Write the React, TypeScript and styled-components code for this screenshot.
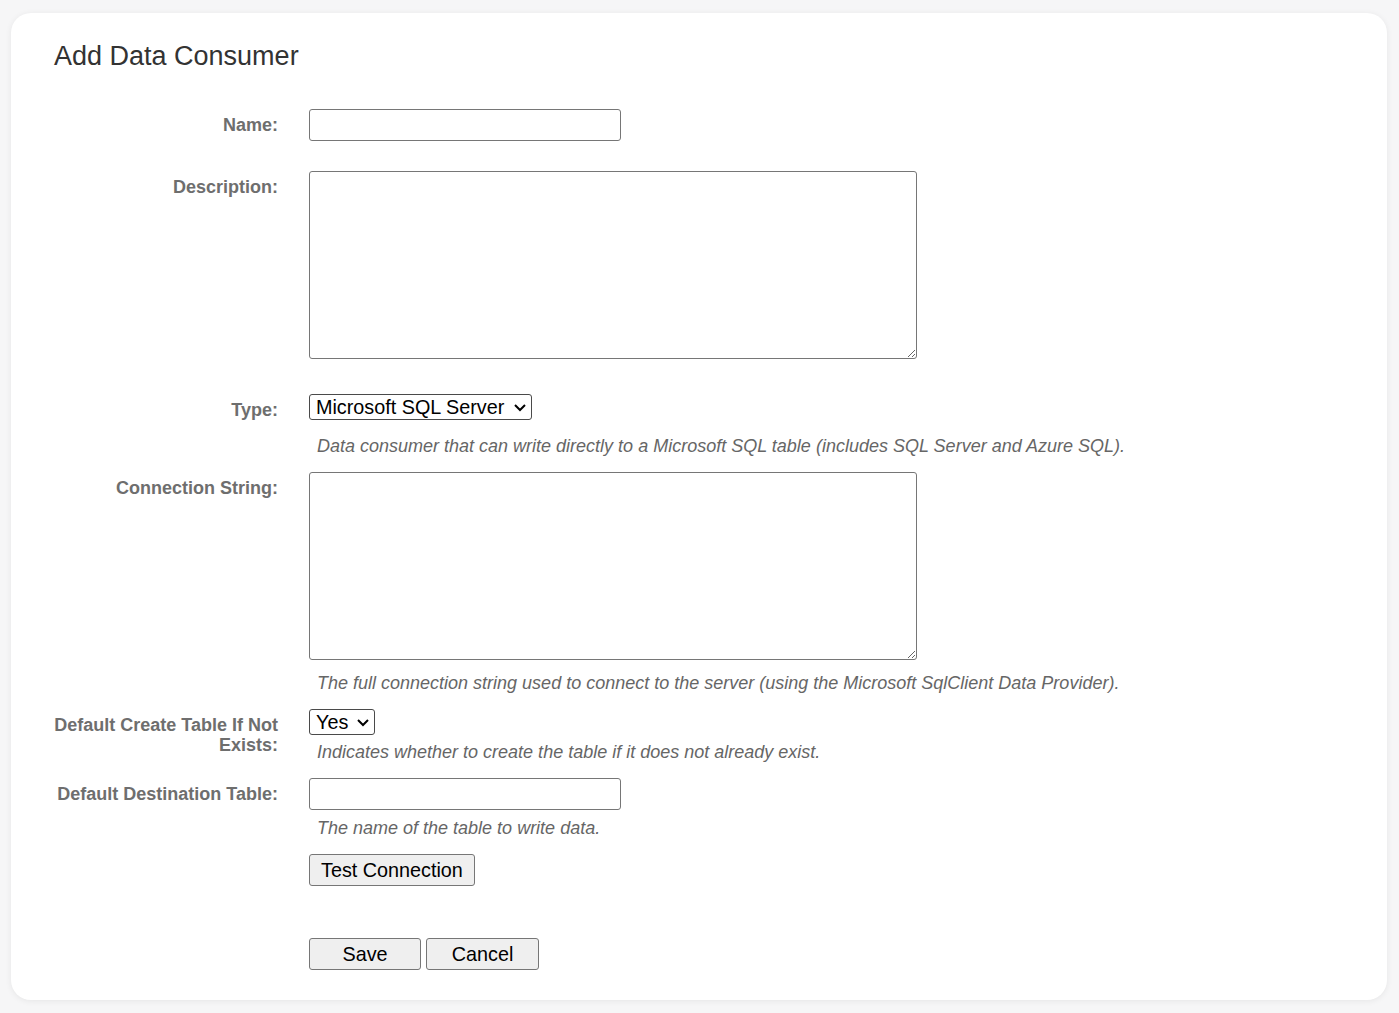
import { ReactNode } from 'react'
import styled, { createGlobalStyle } from 'styled-components'

const GlobalStyle = createGlobalStyle`
  html, body {
    margin: 0;
    padding: 0;
    background: #f6f6f7;
    font-family: 'Liberation Sans', Arial, sans-serif;
    font-size: 18px;
  }
`

const Page = styled.div`
  padding: 13px 12px 14px 11px;
`

const Card = styled.div`
  background: #ffffff;
  border-radius: 20px;
  box-shadow: 0 1px 6px rgba(0, 0, 0, 0.07);
  padding: 28px 43px 30px 43px;
`

const Title = styled.h1`
  margin: 0 0 38px 0;
  font-size: 27px;
  font-weight: normal;
  line-height: 30px;
  color: #333;
`

const Row = styled.div<{ $space: number }>`
  display: grid;
  grid-template-columns: 224px 1fr;
  column-gap: 31px;
  margin-bottom: ${(p) => p.$space}px;
`

const Label = styled.label`
  text-align: right;
  font-weight: bold;
  color: #6e6e6e;
  line-height: 20px;
  padding-top: 6px;
`

const Cell = styled.div`
  display: flex;
  flex-direction: column;
  align-items: flex-start;
`

const TextInput = styled.input`
  box-sizing: border-box;
  width: 312px;
  height: 32px;
  margin: 0;
  border: 1px solid #767676;
  border-radius: 3px;
  font-family: inherit;
  font-size: 18px;
  padding: 2px 6px;
`

const TextArea = styled.textarea`
  display: block;
  box-sizing: border-box;
  width: 608px;
  height: 188px;
  margin: 0;
  border: 1px solid #767676;
  border-radius: 3px;
  font-family: inherit;
  font-size: 18px;
  padding: 2px;
`

const SelectWrap = styled.div`
  position: relative;
  display: inline-block;
`

const Select = styled.select`
  display: block;
  box-sizing: border-box;
  height: 26px;
  margin: 0;
  padding: 0 25px 0 6px;
  appearance: none;
  -webkit-appearance: none;
  background: #fff;
  border: 1px solid #4a4a4a;
  border-radius: 3px;
  font-family: 'Liberation Sans', Arial, sans-serif;
  font-size: 19.8px;
  line-height: 24px;
  color: #000;
`

const Chevron = styled.svg`
  position: absolute;
  right: 5px;
  top: 9px;
  width: 14px;
  height: 9px;
  pointer-events: none;
`

const Help = styled.div<{ $top: number }>`
  margin-top: ${(p) => p.$top}px;
  padding-left: 8px;
  font-style: italic;
  color: #666;
  line-height: 20px;
`

const Button = styled.button<{ $w?: number }>`
  box-sizing: border-box;
  height: 32px;
  ${(p) => (p.$w ? `width: ${p.$w}px;` : '')}
  padding: 0 11px;
  margin: 0;
  background: #efefef;
  border: 1px solid #767676;
  border-radius: 3px;
  font-family: 'Liberation Sans', Arial, sans-serif;
  font-size: 19.8px;
  color: #000;
`

const Buttons = styled.div`
  display: flex;
  gap: 5px;
`

function Field(props: { label: ReactNode; space: number; children: ReactNode }) {
  return (
    <Row $space={props.space}>
      <Label>{props.label}</Label>
      <Cell>{props.children}</Cell>
    </Row>
  )
}

function Dropdown(props: { value: string; options: [string, string][] }) {
  return (
    <SelectWrap>
      <Select defaultValue={props.value}>
        {props.options.map(([v, t]) => (
          <option key={v} value={v}>
            {t}
          </option>
        ))}
      </Select>
      <Chevron viewBox='0 0 14 9'>
        <path d='M2 2 L7 7 L12 2' fill='none' stroke='#000' strokeWidth='2' />
      </Chevron>
    </SelectWrap>
  )
}

export default function App() {
  return (
    <>
      <GlobalStyle />
      <Page>
        <Card>
          <Title>Add Data Consumer</Title>
          <Field label='Name:' space={30}>
            <TextInput type='text' />
          </Field>
          <Field label='Description:' space={35}>
            <TextArea />
          </Field>
          <Field label='Type:' space={16}>
            <Dropdown value='mssql' options={[['mssql', 'Microsoft SQL Server']]} />
            <Help $top={16}>
              Data consumer that can write directly to a Microsoft SQL table (includes SQL Server and Azure SQL).
            </Help>
          </Field>
          <Field label='Connection String:' space={16}>
            <TextArea />
            <Help $top={13}>
              The full connection string used to connect to the server (using the Microsoft SqlClient Data Provider).
            </Help>
          </Field>
          <Field label='Default Create Table If Not Exists:' space={16}>
            <Dropdown
              value='yes'
              options={[
                ['yes', 'Yes'],
                ['no', 'No'],
              ]}
            />
            <Help $top={7}>Indicates whether to create the table if it does not already exist.</Help>
          </Field>
          <Field label='Default Destination Table:' space={16}>
            <TextInput type='text' />
            <Help $top={8}>The name of the table to write data.</Help>
          </Field>
          <Field label='' space={52}>
            <Button>Test Connection</Button>
          </Field>
          <Field label='' space={0}>
            <Buttons>
              <Button $w={112}>Save</Button>
              <Button $w={113}>Cancel</Button>
            </Buttons>
          </Field>
        </Card>
      </Page>
    </>
  )
}
